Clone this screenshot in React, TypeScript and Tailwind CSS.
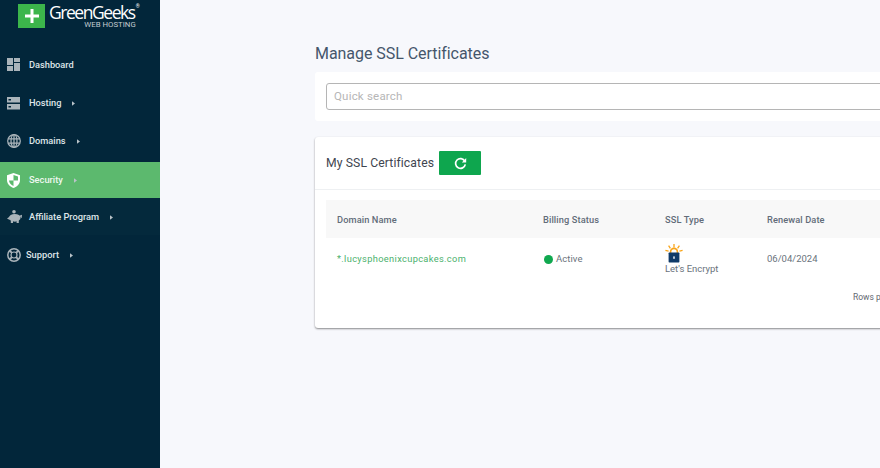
import React from "react";

const font = { fontFamily: "Roboto, sans-serif" };

function Chevron({ className = "" }: { className?: string }) {
  return (
    <svg width="3" height="5" viewBox="0 0 4 6" className={className}>
      <path d="M0 0 L4 3 L0 6 Z" fill="currentColor" />
    </svg>
  );
}

const Dash = () => (
  <svg width="13" height="13" viewBox="0 0 13 13" fill="#aab4ba">
    <rect x="0" y="0" width="6" height="7" />
    <rect x="7" y="0" width="6" height="4" />
    <rect x="0" y="8" width="6" height="5" />
    <rect x="7" y="5" width="6" height="8" />
  </svg>
);
const Server = () => (
  <svg width="13" height="13" viewBox="0 0 13 13" fill="#aab4ba">
    <path fillRule="evenodd" d="M0 0h13v5.5H0zM1.5 2v1.5H4V2z" />
    <path fillRule="evenodd" d="M0 7h13v5.5H0zM1.5 9v1.5H4V9z" />
  </svg>
);
const Globe = () => (
  <svg width="14" height="14" viewBox="0 0 14 14" fill="none" stroke="#aab4ba" strokeWidth="1.25">
    <circle cx="7" cy="7" r="6.3" />
    <ellipse cx="7" cy="7" rx="3" ry="6.3" />
    <path d="M1 4.8h12M1 9.2h12M7 .7v12.6" />
  </svg>
);
const Shield = () => (
  <svg width="13" height="15" viewBox="0 0 13 15">
    <path d="M6.5 0 L13 2.3 V7 C13 11 10 13.6 6.5 15 C3 13.6 0 11 0 7 V2.3 Z" fill="#fff" />
    <path d="M6.5 2 V7.5 H2 C2.2 10 4 12 6.5 13 V7.5 H11 V3.6 Z" fill="#5cb96e" />
  </svg>
);
const Piggy = () => (
  <svg width="15" height="14" viewBox="0 0 15 14" fill="#aab4ba">
    <circle cx="7" cy="1.8" r="1.8" />
    <ellipse cx="7.8" cy="7.8" rx="5.8" ry="3.9" />
    <path d="M0 8.4 L2.8 6.4 V10 Z M3.8 10 h2.2v3h-2.2z M9.6 10 h2.2v3h-2.2z M12.4 5.8 l2.6 -1 -.3 3.4z" />
  </svg>
);
const Lifebuoy = () => (
  <svg width="14" height="14" viewBox="0 0 14 14" fill="none" stroke="#aab4ba">
    <circle cx="7" cy="7" r="6.2" strokeWidth="1.5" />
    <circle cx="7" cy="7" r="3" strokeWidth="1.2" />
    <path d="M2.6 2.6l2.3 2.3M9.1 9.1l2.3 2.3M2.6 11.4l2.3-2.3M9.1 4.9l2.3-2.3" strokeWidth="2" />
  </svg>
);
const Refresh = () => (
  <svg width="13" height="13" viewBox="0 0 13 13" fill="none">
    <path d="M10.8 4.1 A4.9 4.9 0 1 0 11.3 7.4" stroke="#fff" strokeWidth="1.7" />
    <path d="M12.2 1 V5.4 H7.8 Z" fill="#fff" />
  </svg>
);
const LetsEncrypt = () => (
  <svg width="18" height="19" viewBox="0 0 18 19">
    <path d="M9 0v3.6M3.6 1.6l1.8 2.8M14.4 1.6l-1.8 2.8M.4 6.4l3.2.8M17.6 6.4l-3.2.8" stroke="#f9a51a" strokeWidth="1.3" fill="none" />
    <path d="M5.6 9V7.8a3.4 3.4 0 0 1 6.8 0V9" stroke="#f9a51a" strokeWidth="1.6" fill="none" />
    <rect x="3.6" y="8.5" width="10.8" height="10" rx="0.7" fill="#0f3a68" />
    <rect x="8.2" y="12.4" width="1.6" height="2.4" fill="#dfe7ef" />
  </svg>
);

function NavItem({ icon, label, active, className = "", gap = "w-[22px]", chevronGap = "ml-[11px]", band = false }: {
  icon: React.ReactNode; label: string; active?: boolean; className?: string; gap?: string; chevronGap?: string; band?: boolean;
}) {
  return (
    <div className={`flex items-center pl-[7px] ${active ? "bg-[#5cb96e] text-[#eef8f0]" : "text-[#dfe5e8]"} ${band ? "bg-[#04293c]" : ""} ${className}`}>
      <div className={`${gap} shrink-0 flex items-center`}>{icon}</div>
      <span className="text-[9.25px] font-medium leading-none">{label}</span>
      {chevronGap !== "none" && <Chevron className={`${chevronGap} text-[#b9c3c8]`} />}
    </div>
  );
}

export default function App() {
  return (
    <div className="flex w-[880px] h-[468px] overflow-hidden bg-[#f7f8fc]" style={font}>
      <aside className="w-40 shrink-0 bg-[#02263a] flex flex-col">
        <div className="flex items-start pl-[18px] pt-1 h-[47px]">
          <div className="w-[27px] h-6 bg-[#3cb54b] flex items-center justify-center">
            <svg width="14" height="14" viewBox="0 0 14 14"><path d="M5.5 0h3v5.5H14v3H8.5V14h-3V8.5H0v-3h5.5z" fill="#fff" /></svg>
          </div>
          <div className="ml-[4px] flex flex-col items-end">
            <span className="text-[17.5px] leading-[16px] text-white tracking-[-1.45px] pr-[3px]" style={{ fontFamily: "'Open Sans', sans-serif" }}>GreenGeeks</span>
            <span className="text-[7.8px] leading-[8px] mt-[1px] text-[#c3ccd1] mr-[2px]">WEB HOSTING</span>
          </div>
          <span className="text-[5px] leading-[6px] text-white mt-[-1px] ml-[-2px]">®</span>
        </div>
        <NavItem icon={<Dash />} label="Dashboard" chevronGap="none" className="h-[37px] pb-[2px]" />
        <NavItem icon={<Server />} label="Hosting" className="h-[39px] pb-[1px]" />
        <NavItem icon={<Globe />} label="Domains" className="h-[39px] pb-[3px]" />
        <NavItem icon={<Shield />} label="Security" active className="h-9" />
        <NavItem icon={<Piggy />} label="Affiliate Program" band className="h-[37px] pt-[1px]" />
        <NavItem icon={<Lifebuoy />} label="Support" gap="w-[19px]" className="h-[40px]" />
      </aside>
      <main className="flex-1 min-w-0 pl-[155px] pt-[44px]">
        <h1 className="text-[16px] leading-[19px] font-normal text-[#45566b] tracking-[-0.05px]">Manage SSL Certificates</h1>
        <div className="mt-[9px] h-[49px] w-[600px] bg-white rounded-[3px] pl-[11px] pt-[11px]">
          <div className="h-[27px] border border-[#b5b5b5] rounded-[3px] flex items-center pl-[7px] text-[11.5px] text-[#b6b6b6] tracking-[0.2px]">
            Quick search
          </div>
        </div>
        <section className="mt-4 w-[600px] h-[191px] bg-white rounded-[3px] shadow-[0_1px_2px_rgba(0,0,0,0.45)] flex flex-col overflow-hidden">
          <div className="h-[53px] flex items-center pl-[11px] border-b border-[#eef0f2]">
            <span className="text-[12.2px] font-normal text-[#3f4650] tracking-[0.1px]">My SSL Certificates</span>
            <button className="ml-[5px] w-[42px] h-6 bg-[#0ea64e] rounded-[1px] flex items-center justify-center"><Refresh /></button>
          </div>
          <div className="mt-[10px] ml-[11px] h-[38px] pt-[1px] bg-[#f8f8f8] flex items-center text-[9.25px] font-medium text-[#626c79] tracking-[0.1px]">
            <span className="ml-[11px] w-[206px]">Domain Name</span>
            <span className="w-[122px]">Billing Status</span>
            <span className="w-[102px]">SSL Type</span>
            <span>Renewal Date</span>
          </div>
          <div className="h-[41px] ml-[11px] flex items-center text-[9.5px] text-[#6a737c] tracking-[0.05px]">
            <span className="ml-[11px] w-[207px] text-[#4bb16d] text-[9.25px] tracking-[0.35px] pt-[1px]">*.lucysphoenixcupcakes.com</span>
            <span className="w-[121px] flex items-center pt-[1px]">
              <span className="w-[9px] h-[9px] rounded-full bg-[#10a84f] mr-[3px]" />Active
            </span>
            <span className="w-[102px] flex flex-col items-start">
              <LetsEncrypt />
              <span className="leading-[10px] mt-[1px] tracking-[-0.02px]">Let's Encrypt</span>
            </span>
            <span className="tracking-[0px] pt-[1px]">06/04/2024</span>
          </div>
          <div className="mt-[12px] pl-[538px] text-[8.5px] text-[#5f6770] leading-[12px] whitespace-nowrap">
            Rows per page
          </div>
        </section>
      </main>
    </div>
  );
}
